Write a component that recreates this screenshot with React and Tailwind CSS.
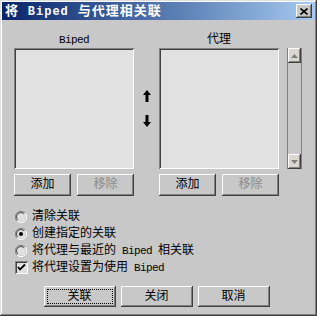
import React from "react";

const raised = "shadow-[inset_-1px_-1px_#404040,inset_1px_1px_#ffffff,inset_-2px_-2px_#808080]";
const sunken = "shadow-[inset_1px_1px_#808080,inset_-1px_-1px_#ffffff,inset_2px_2px_#404040]";

const L = ({ children }) => (
  <span className="font-['Liberation_Mono',monospace] text-[11px] tracking-[-0.6px]">{children}</span>
);

const Btn = ({ children, disabled, focus, w = "w-[57px]", h = "h-[22px]" }) => (
  <div className={`${w} ${h} ${raised} bg-[#c8c8c8] flex items-center justify-center p-[4px]`}>
    <div
      className={`w-full h-full flex items-center justify-center ${
        focus ? "outline-1 outline-dotted outline-black" : ""
      } ${disabled ? "text-[#8a8a8a]" : "text-black"}`}
    >
      {children}
    </div>
  </div>
);

const Radio = ({ checked }) => (
  <svg width="12" height="12" viewBox="0 0 12 12" className="shrink-0">
    <path d="M2 10 A5.5 5.5 0 0 1 10 2" stroke="#808080" strokeWidth="1" fill="none" />
    <path d="M10 2 A5.5 5.5 0 0 1 2 10" stroke="#ffffff" strokeWidth="1" fill="none" />
    <circle cx="6" cy="6" r="4.5" fill="#e0e0e0" />
    <path d="M2.8 8.8 A4 4 0 0 1 8.8 2.8" stroke="#404040" strokeWidth="1" fill="none" />
    {checked && <circle cx="6" cy="6" r="2" fill="#000" />}
  </svg>
);

const Check = () => (
  <div className={`w-[13px] h-[13px] ${sunken} bg-[#e0e0e0] flex items-center justify-center shrink-0`}>
    <svg width="9" height="9" viewBox="0 0 9 9">
      <path d="M1 4 L3 6.5 L8 1.5" stroke="#000" strokeWidth="1.8" fill="none" />
    </svg>
  </div>
);

const Arrow = ({ down }) => (
  <svg width="8" height="12" viewBox="0 0 8 12" className={down ? "rotate-180" : ""}>
    <path d="M4 0 L8 5 L5.5 5 L5.5 12 L2.5 12 L2.5 5 L0 5 Z" fill="#000" />
  </svg>
);

const App = () => {
  return (
    <div className="w-[317px] h-[316px] bg-[#c8c8c8] p-[2px] flex flex-col shadow-[inset_-1px_-1px_#404040,inset_1px_1px_#dfdfdf,inset_-2px_-2px_#808080,inset_2px_2px_#ffffff] font-['Liberation_Mono','Noto_Sans_CJK_SC',monospace] text-[12px] leading-none">
      <div className="h-[18px] bg-gradient-to-r from-[#0a246a] to-[#a6caf0] flex items-center justify-between pl-[3px] pr-[3px]">
        <span className="text-white font-bold text-[13px] tracking-[1px]">将 <span className="font-['Liberation_Mono',monospace] text-[12px]">Biped</span> 与代理相关联</span>
        <div className={`w-[16px] h-[14px] bg-[#c8c8c8] ${raised} flex items-center justify-center`}>
          <svg width="8" height="7" viewBox="0 0 8 7">
            <path d="M0.5 0.5 L7.5 6.5 M7.5 0.5 L0.5 6.5" stroke="#000" strokeWidth="1.6" />
          </svg>
        </div>
      </div>

      <div className="flex pl-[12px] pt-[13px]">
        <div className="w-[120px] flex flex-col">
          <div className="h-[14px] mb-[1px] flex items-center justify-center"><L>Biped</L></div>
          <div className={`h-[121px] bg-[#e1e1e1] ${sunken}`} />
          <div className="flex justify-between mt-[5px]">
            <Btn>添加</Btn>
            <Btn disabled>移除</Btn>
          </div>
        </div>

        <div className="w-[25px] flex flex-col items-center pt-[57px] gap-[13px] pl-[1px]">
          <Arrow />
          <Arrow down />
        </div>

        <div className="w-[120px] flex flex-col">
          <div className="h-[14px] mb-[1px] flex items-center justify-center">代理</div>
          <div className={`h-[121px] bg-[#e1e1e1] ${sunken}`} />
          <div className="flex justify-between mt-[5px]">
            <Btn>添加</Btn>
            <Btn disabled>移除</Btn>
          </div>
        </div>

        <div className="ml-[8px] mt-[15px] w-[15px] h-[121px] flex flex-col border-x border-[#808080] bg-[#c8c8c8]">
          <div className={`h-[15px] bg-[#d8d8d0] ${raised} flex items-center justify-center`}>
            <svg width="7" height="4" viewBox="0 0 7 4"><path d="M3.5 0 L7 4 L0 4 Z" fill="#808080" /></svg>
          </div>
          <div className="flex-1" />
          <div className={`h-[15px] bg-[#d8d8d0] ${raised} flex items-center justify-center`}>
            <svg width="7" height="4" viewBox="0 0 7 4"><path d="M0 0 L7 0 L3.5 4 Z" fill="#808080" /></svg>
          </div>
        </div>
      </div>

      <div className="flex flex-col pl-[13px] mt-[12px]">
        <div className="h-[17px] flex items-center gap-[5px]"><Radio /><span>清除关联</span></div>
        <div className="h-[17px] flex items-center gap-[5px]"><Radio checked /><span>创建指定的关联</span></div>
        <div className="h-[17px] flex items-center gap-[5px]"><Radio /><span>将代理与最近的<L> Biped </L>相关联</span></div>
        <div className="h-[17px] flex items-center gap-[4px]"><Check /><span>将代理设置为使用<L> Biped</L></span></div>
      </div>

      <div className="flex justify-center gap-[5px] mt-[10px] pr-[4px]">
        <Btn w="w-[72px]" h="h-[21px]" focus>关联</Btn>
        <Btn w="w-[72px]" h="h-[21px]">关闭</Btn>
        <Btn w="w-[72px]" h="h-[21px]">取消</Btn>
      </div>
    </div>
  );
};

export default App;
